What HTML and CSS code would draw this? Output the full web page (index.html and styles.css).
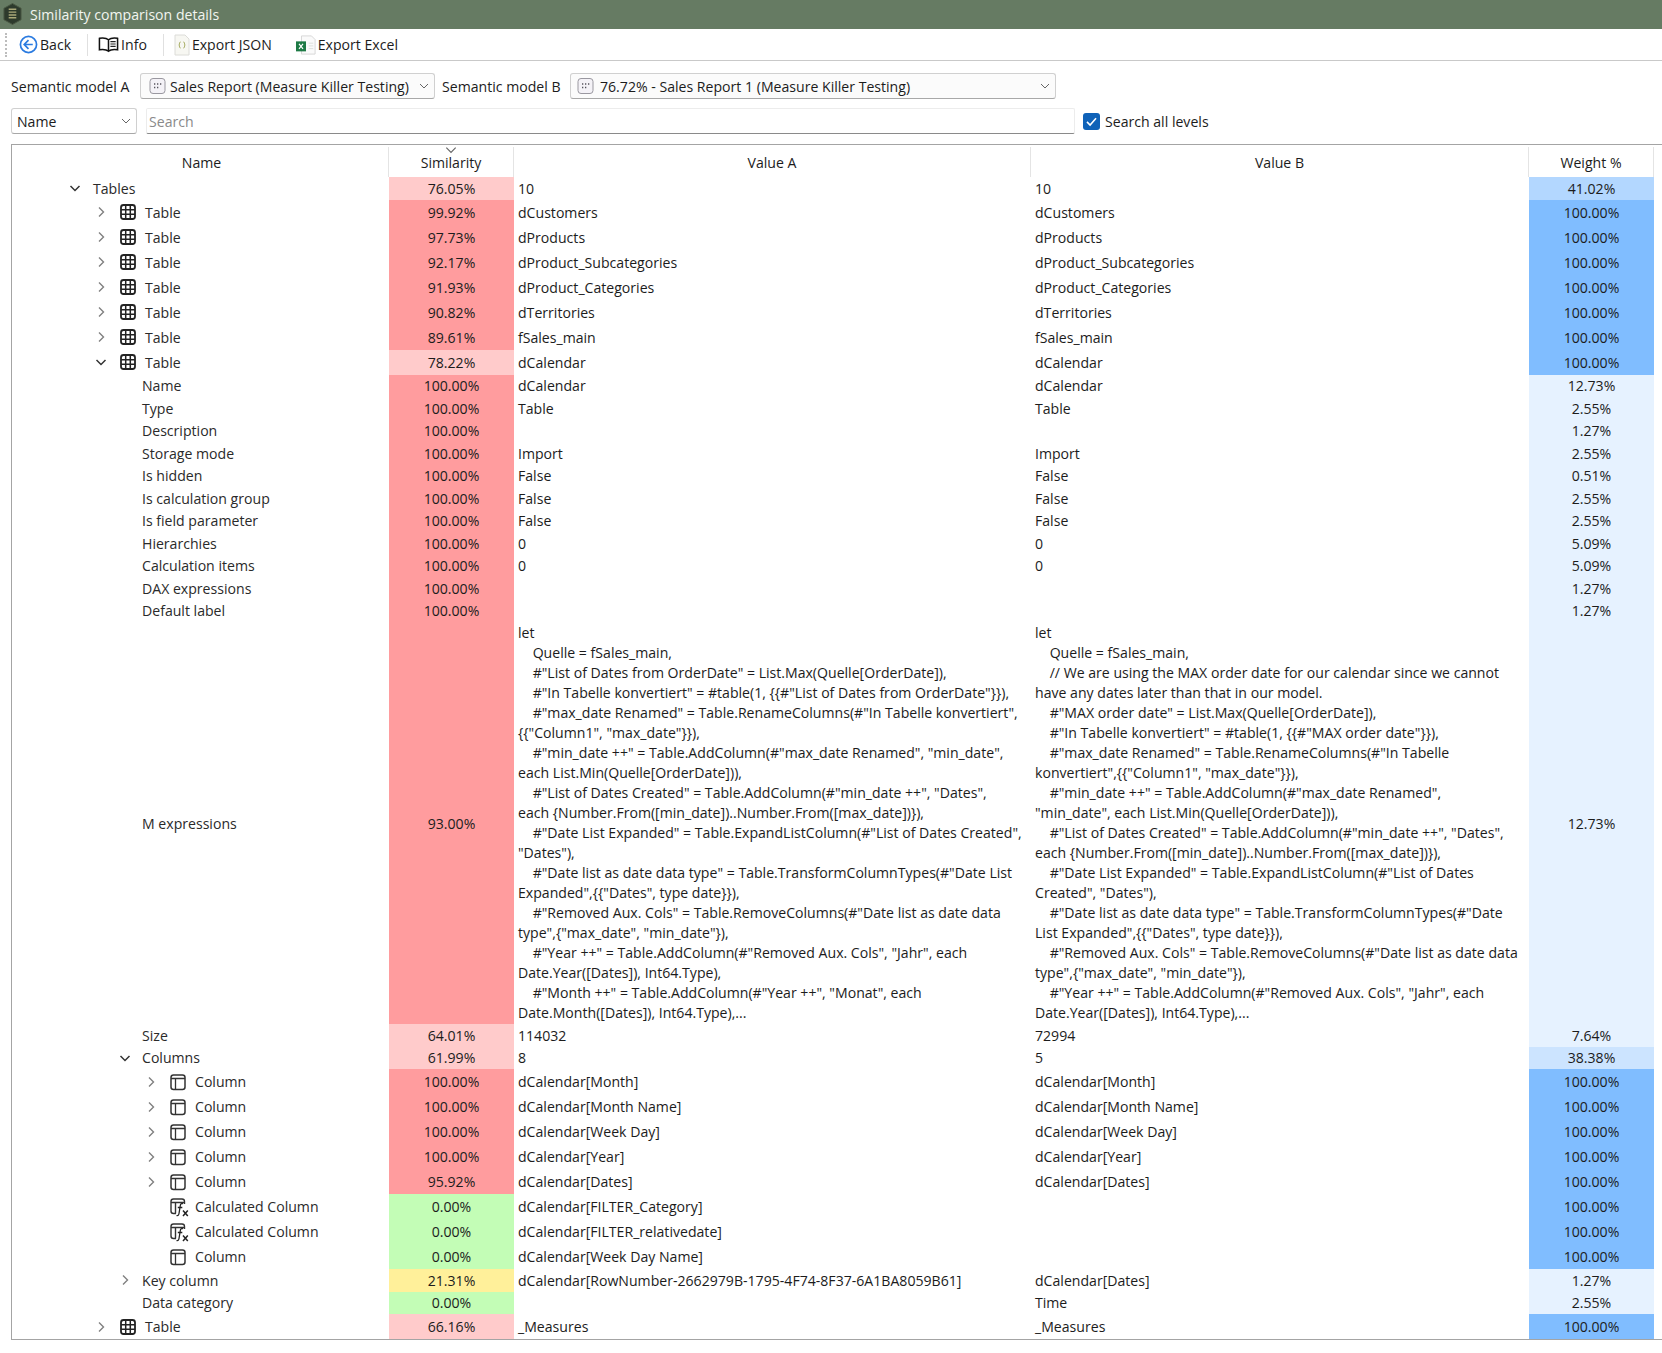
FILE: index.html
```html
<!DOCTYPE html>
<html lang="en">
<head>
    <meta charset="UTF-8">
    <title>Similarity comparison details</title>
    <link rel="stylesheet" href="styles.css">
</head>
<body>
    <!-- Icon sprite -->
    <svg class="sprite" xmlns="http://www.w3.org/2000/svg">
        <symbol id="i-right" viewBox="0 0 16 16"><path d="M6 3.5 10.5 8 6 12.5" fill="none" stroke="#808080" stroke-width="1.4"/></symbol>
        <symbol id="i-down" viewBox="0 0 16 16"><path d="M3.5 6 8 10.5 12.5 6" fill="none" stroke="#333" stroke-width="1.5"/></symbol>
        <symbol id="i-table" viewBox="0 0 18 18"><rect x="2" y="2" width="14" height="14" rx="2.5" fill="none" stroke="#222" stroke-width="1.8"/><path d="M6.7 2v14M11.3 2v14M2 6.7h14M2 11.3h14" fill="none" stroke="#222" stroke-width="1.5"/></symbol>
        <symbol id="i-column" viewBox="0 0 18 18"><rect x="2" y="2" width="14" height="14.5" rx="2.5" fill="none" stroke="#333" stroke-width="1.5"/><path d="M2 5.5h14M6.5 5.5v11" fill="none" stroke="#333" stroke-width="1.3"/></symbol>
        <symbol id="i-calc" viewBox="0 0 20 20"><path d="M7 16.500H4.500A2.500 2.500 0 0 1 2 14V4.500A2.500 2.500 0 0 1 4.500 2h8.500A2.500 2.500 0 0 1 15.500 4.500V7M2 5.500h13.500M6.500 5.500v11" fill="none" stroke="#333" stroke-width="1.400"/><path d="M7.500 18.500c1.500.5 2.200-.3 2.500-2l1.300-8c.3-1.600 1.200-2.300 2.700-1.900M8.800 10.500h4.500" fill="none" stroke="#222" stroke-width="1.300"/><path d="M14 13.500l4.800 5.500M18.800 13.500 14 19" fill="none" stroke="#222" stroke-width="1.500"/></symbol>
        <symbol id="i-combo" viewBox="0 0 18 18"><rect x="1" y="1.500" width="15" height="15" rx="3" fill="#f4f2f7" stroke="#9a98a0"/><path d="M5 7h1.300M8 7h1.300M11 7h1.300M5 10.500h1.300M8 10.500h1.300" fill="none" stroke="#55535c" stroke-width="1.300"/></symbol>
        <symbol id="i-caret" viewBox="0 0 12 12"><path d="M2 4l4 4 4-4" fill="none" stroke="#666" stroke-width="1"/></symbol>
    </svg>

    <!-- Title bar -->
    <div class="titlebar">
        <svg class="app-logo" viewBox="0 0 20 24">
            <path d="M10 1 19 6v12l-9 5-9-5V6z" fill="#2d3a2c" stroke="#4b5a43"/>
            <path d="M6 7h8M6 10h8M6 13h8M6 16h8" stroke="#a9a878" stroke-width="1.500"/>
        </svg>
        <span>Similarity comparison details</span>
    </div>

    <!-- Toolbar -->
    <div class="toolbar">
        <div class="grip"></div>
        <div class="tool tool-back">
            <svg class="tool-icon" viewBox="0 0 20 20">
                <circle cx="10" cy="10" r="8.500" fill="#fff" stroke="#2b7be0" stroke-width="1.800"/>
                <path d="M10 5.500 5.500 10l4.500 4.500M5.500 10h9" fill="none" stroke="#2b7be0" stroke-width="1.800"/>
            </svg>
            <span>Back</span>
        </div>
        <div class="tool-sep"></div>
        <div class="tool tool-info">
            <svg class="tool-icon book" viewBox="0 0 22 18">
                <path d="M11 3.500C9 1.800 5 1.500 1.500 2v12c3.500-.5 7.500-.2 9.500 1.500 2-1.700 6-2 9.500-1.500V2C17 1.500 13 1.800 11 3.500zM11 3.500v12" fill="#fff" stroke="#111" stroke-width="1.600"/>
                <path d="M13 5.500h5.500M13 8h5.500M13 10.500h5.500" stroke="#222" stroke-width="1.200"/>
            </svg>
            <span>Info</span>
        </div>
        <div class="tool-sep"></div>
        <div class="tool tool-json">
            <svg class="tool-icon" viewBox="0 0 16 22">
                <path d="M1 1h10l4 4v16H1z" fill="#f7f7f2" stroke="#dcdcd8"/>
                <path d="M6.500 8c-1.300 0-.8 2.500-1.500 3 .7.500.2 3 1.500 3M9.500 8c1.300 0 .8 2.500 1.500 3-.7.500-.2 3-1.500 3" fill="none" stroke="#9aa04a" stroke-width="1"/>
            </svg>
            <span>Export JSON</span>
        </div>
        <div class="tool tool-excel">
            <svg class="tool-icon excel" viewBox="0 0 22 22">
                <path d="M6 1h11l4 4v16H6z" fill="#fafafa" stroke="#d4d4d4"/>
                <path d="M14 9h5M14 12h5M14 15h5" stroke="#d9dfd9"/>
                <rect x="0" y="7" width="11" height="11" fill="#1d7a45"/>
                <path d="M3.300 9.800l4.400 5.400M7.700 9.800l-4.400 5.400" stroke="#fff" stroke-width="1.300"/>
            </svg>
            <span>Export Excel</span>
        </div>
    </div>

    <!-- Model selection -->
    <div class="model-row">
        <label class="model-label">Semantic model A</label>
        <div class="combo combo-a">
            <svg class="combo-icon"><use href="#i-combo"/></svg>
            <span class="combo-text">Sales Report (Measure Killer Testing)</span>
            <svg class="caret"><use href="#i-caret"/></svg>
        </div>
        <label class="model-label label-b">Semantic model B</label>
        <div class="combo combo-b">
            <svg class="combo-icon"><use href="#i-combo"/></svg>
            <span class="combo-text">76.72% - Sales Report 1 (Measure Killer Testing)</span>
            <svg class="caret"><use href="#i-caret"/></svg>
        </div>
    </div>

    <!-- Search -->
    <div class="search-row">
        <div class="combo combo-field">
            <span class="combo-text">Name</span>
            <svg class="caret"><use href="#i-caret"/></svg>
        </div>
        <div class="search-box">Search</div>
        <div class="check">
            <svg viewBox="0 0 12 12"><path d="M2.800 6.300 5 8.500l4.200-4.800" fill="none" stroke="#fff" stroke-width="1.100"/></svg>
        </div>
        <span class="check-label">Search all levels</span>
    </div>

    <!-- Comparison tree -->
    <div class="grid">
        <table>
            <colgroup>
                <col class="col-name"><col class="col-sim"><col class="col-a"><col class="col-b"><col class="col-weight"><col>
            </colgroup>
            <thead>
                <tr>
                    <th class="th-name">Name</th>
                    <th>Similarity<svg class="sort"><use href="#i-caret"/></svg></th>
                    <th>Value A</th>
                    <th>Value B</th>
                    <th>Weight %</th>
                    <th></th>
                </tr>
            </thead>
            <tbody>
                <tr class="r-sub"><td><div class="node lv0"><svg class="chev"><use href="#i-down"/></svg><span class="lbl-tables">Tables</span></div></td><td class="sim light">76.05%</td><td class="val">10</td><td class="val">10</td><td class="wt mid">41.02%</td><td></td></tr>
                <tr class="r-big"><td><div class="node lv1"><svg class="chev"><use href="#i-right"/></svg><svg class="ico"><use href="#i-table"/></svg>Table</div></td><td class="sim strong">99.92%</td><td class="val">dCustomers</td><td class="val">dCustomers</td><td class="wt full">100.00%</td><td></td></tr>
                <tr class="r-big"><td><div class="node lv1"><svg class="chev"><use href="#i-right"/></svg><svg class="ico"><use href="#i-table"/></svg>Table</div></td><td class="sim strong">97.73%</td><td class="val">dProducts</td><td class="val">dProducts</td><td class="wt full">100.00%</td><td></td></tr>
                <tr class="r-big"><td><div class="node lv1"><svg class="chev"><use href="#i-right"/></svg><svg class="ico"><use href="#i-table"/></svg>Table</div></td><td class="sim strong">92.17%</td><td class="val">dProduct_Subcategories</td><td class="val">dProduct_Subcategories</td><td class="wt full">100.00%</td><td></td></tr>
                <tr class="r-big"><td><div class="node lv1"><svg class="chev"><use href="#i-right"/></svg><svg class="ico"><use href="#i-table"/></svg>Table</div></td><td class="sim strong">91.93%</td><td class="val">dProduct_Categories</td><td class="val">dProduct_Categories</td><td class="wt full">100.00%</td><td></td></tr>
                <tr class="r-big"><td><div class="node lv1"><svg class="chev"><use href="#i-right"/></svg><svg class="ico"><use href="#i-table"/></svg>Table</div></td><td class="sim strong">90.82%</td><td class="val">dTerritories</td><td class="val">dTerritories</td><td class="wt full">100.00%</td><td></td></tr>
                <tr class="r-big"><td><div class="node lv1"><svg class="chev"><use href="#i-right"/></svg><svg class="ico"><use href="#i-table"/></svg>Table</div></td><td class="sim strong">89.61%</td><td class="val">fSales_main</td><td class="val">fSales_main</td><td class="wt full">100.00%</td><td></td></tr>
                <tr class="r-big"><td><div class="node lv1"><svg class="chev"><use href="#i-down"/></svg><svg class="ico"><use href="#i-table"/></svg>Table</div></td><td class="sim light">78.22%</td><td class="val">dCalendar</td><td class="val">dCalendar</td><td class="wt full">100.00%</td><td></td></tr>
                <tr class="r-sub"><td><div class="node lv2">Name</div></td><td class="sim strong">100.00%</td><td class="val">dCalendar</td><td class="val">dCalendar</td><td class="wt pale">12.73%</td><td></td></tr>
                <tr class="r-sub"><td><div class="node lv2">Type</div></td><td class="sim strong">100.00%</td><td class="val">Table</td><td class="val">Table</td><td class="wt pale">2.55%</td><td></td></tr>
                <tr class="r-sub"><td><div class="node lv2">Description</div></td><td class="sim strong">100.00%</td><td class="val"></td><td class="val"></td><td class="wt pale">1.27%</td><td></td></tr>
                <tr class="r-sub"><td><div class="node lv2">Storage mode</div></td><td class="sim strong">100.00%</td><td class="val">Import</td><td class="val">Import</td><td class="wt pale">2.55%</td><td></td></tr>
                <tr class="r-sub"><td><div class="node lv2">Is hidden</div></td><td class="sim strong">100.00%</td><td class="val">False</td><td class="val">False</td><td class="wt pale">0.51%</td><td></td></tr>
                <tr class="r-sub"><td><div class="node lv2">Is calculation group</div></td><td class="sim strong">100.00%</td><td class="val">False</td><td class="val">False</td><td class="wt pale">2.55%</td><td></td></tr>
                <tr class="r-sub"><td><div class="node lv2">Is field parameter</div></td><td class="sim strong">100.00%</td><td class="val">False</td><td class="val">False</td><td class="wt pale">2.55%</td><td></td></tr>
                <tr class="r-sub"><td><div class="node lv2">Hierarchies</div></td><td class="sim strong">100.00%</td><td class="val">0</td><td class="val">0</td><td class="wt pale">5.09%</td><td></td></tr>
                <tr class="r-sub"><td><div class="node lv2">Calculation items</div></td><td class="sim strong">100.00%</td><td class="val">0</td><td class="val">0</td><td class="wt pale">5.09%</td><td></td></tr>
                <tr class="r-sub"><td><div class="node lv2">DAX expressions</div></td><td class="sim strong">100.00%</td><td class="val"></td><td class="val"></td><td class="wt pale">1.27%</td><td></td></tr>
                <tr class="r-sub"><td><div class="node lv2">Default label</div></td><td class="sim strong">100.00%</td><td class="val"></td><td class="val"></td><td class="wt pale">1.27%</td><td></td></tr>
                <tr class="r-code">
                    <td><div class="node lv2">M expressions</div></td>
                    <td class="sim strong">93.00%</td>
                    <td class="val code">let
    Quelle = fSales_main,
    #"List of Dates from OrderDate" = List.Max(Quelle[OrderDate]),
    #"In Tabelle konvertiert" = #table(1, {{#"List of Dates from OrderDate"}}),
    #"max_date Renamed" = Table.RenameColumns(#"In Tabelle konvertiert",
{{"Column1", "max_date"}}),
    #"min_date ++" = Table.AddColumn(#"max_date Renamed", "min_date",
each List.Min(Quelle[OrderDate])),
    #"List of Dates Created" = Table.AddColumn(#"min_date ++", "Dates",
each {Number.From([min_date])..Number.From([max_date])}),
    #"Date List Expanded" = Table.ExpandListColumn(#"List of Dates Created",
"Dates"),
    #"Date list as date data type" = Table.TransformColumnTypes(#"Date List
Expanded",{{"Dates", type date}}),
    #"Removed Aux. Cols" = Table.RemoveColumns(#"Date list as date data
type",{"max_date", "min_date"}),
    #"Year ++" = Table.AddColumn(#"Removed Aux. Cols", "Jahr", each
Date.Year([Dates]), Int64.Type),
    #"Month ++" = Table.AddColumn(#"Year ++", "Monat", each
Date.Month([Dates]), Int64.Type),...</td>
                    <td class="val code">let
    Quelle = fSales_main,
    // We are using the MAX order date for our calendar since we cannot
have any dates later than that in our model.
    #"MAX order date" = List.Max(Quelle[OrderDate]),
    #"In Tabelle konvertiert" = #table(1, {{#"MAX order date"}}),
    #"max_date Renamed" = Table.RenameColumns(#"In Tabelle
konvertiert",{{"Column1", "max_date"}}),
    #"min_date ++" = Table.AddColumn(#"max_date Renamed",
"min_date", each List.Min(Quelle[OrderDate])),
    #"List of Dates Created" = Table.AddColumn(#"min_date ++", "Dates",
each {Number.From([min_date])..Number.From([max_date])}),
    #"Date List Expanded" = Table.ExpandListColumn(#"List of Dates
Created", "Dates"),
    #"Date list as date data type" = Table.TransformColumnTypes(#"Date
List Expanded",{{"Dates", type date}}),
    #"Removed Aux. Cols" = Table.RemoveColumns(#"Date list as date data
type",{"max_date", "min_date"}),
    #"Year ++" = Table.AddColumn(#"Removed Aux. Cols", "Jahr", each
Date.Year([Dates]), Int64.Type),...</td>
                    <td class="wt pale">12.73%</td><td></td>
                </tr>
                <tr class="r-sub"><td><div class="node lv2">Size</div></td><td class="sim light">64.01%</td><td class="val">114032</td><td class="val">72994</td><td class="wt pale">7.64%</td><td></td></tr>
                <tr class="r-sub"><td><div class="node lv1b"><svg class="chev"><use href="#i-down"/></svg>Columns</div></td><td class="sim light">61.99%</td><td class="val">8</td><td class="val">5</td><td class="wt soft">38.38%</td><td></td></tr>
                <tr class="r-big"><td><div class="node lv3"><svg class="chev"><use href="#i-right"/></svg><svg class="ico"><use href="#i-column"/></svg>Column</div></td><td class="sim strong">100.00%</td><td class="val">dCalendar[Month]</td><td class="val">dCalendar[Month]</td><td class="wt full">100.00%</td><td></td></tr>
                <tr class="r-big"><td><div class="node lv3"><svg class="chev"><use href="#i-right"/></svg><svg class="ico"><use href="#i-column"/></svg>Column</div></td><td class="sim strong">100.00%</td><td class="val">dCalendar[Month Name]</td><td class="val">dCalendar[Month Name]</td><td class="wt full">100.00%</td><td></td></tr>
                <tr class="r-big"><td><div class="node lv3"><svg class="chev"><use href="#i-right"/></svg><svg class="ico"><use href="#i-column"/></svg>Column</div></td><td class="sim strong">100.00%</td><td class="val">dCalendar[Week Day]</td><td class="val">dCalendar[Week Day]</td><td class="wt full">100.00%</td><td></td></tr>
                <tr class="r-big"><td><div class="node lv3"><svg class="chev"><use href="#i-right"/></svg><svg class="ico"><use href="#i-column"/></svg>Column</div></td><td class="sim strong">100.00%</td><td class="val">dCalendar[Year]</td><td class="val">dCalendar[Year]</td><td class="wt full">100.00%</td><td></td></tr>
                <tr class="r-big"><td><div class="node lv3"><svg class="chev"><use href="#i-right"/></svg><svg class="ico"><use href="#i-column"/></svg>Column</div></td><td class="sim strong">95.92%</td><td class="val">dCalendar[Dates]</td><td class="val">dCalendar[Dates]</td><td class="wt full">100.00%</td><td></td></tr>
                <tr class="r-big"><td><div class="node lv3 no-chev"><svg class="ico ico-calc"><use href="#i-calc"/></svg>Calculated Column</div></td><td class="sim none">0.00%</td><td class="val">dCalendar[FILTER_Category]</td><td class="val"></td><td class="wt full">100.00%</td><td></td></tr>
                <tr class="r-big"><td><div class="node lv3 no-chev"><svg class="ico ico-calc"><use href="#i-calc"/></svg>Calculated Column</div></td><td class="sim none">0.00%</td><td class="val">dCalendar[FILTER_relativedate]</td><td class="val"></td><td class="wt full">100.00%</td><td></td></tr>
                <tr class="r-big"><td><div class="node lv3 no-chev"><svg class="ico"><use href="#i-column"/></svg>Column</div></td><td class="sim none">0.00%</td><td class="val">dCalendar[Week Day Name]</td><td class="val"></td><td class="wt full">100.00%</td><td></td></tr>
                <tr class="r-sub"><td><div class="node lv1b"><svg class="chev"><use href="#i-right"/></svg>Key column</div></td><td class="sim low">21.31%</td><td class="val">dCalendar[RowNumber-2662979B-1795-4F74-8F37-6A1BA8059B61]</td><td class="val">dCalendar[Dates]</td><td class="wt pale">1.27%</td><td></td></tr>
                <tr class="r-sub"><td><div class="node lv2">Data category</div></td><td class="sim none">0.00%</td><td class="val"></td><td class="val">Time</td><td class="wt pale">2.55%</td><td></td></tr>
                <tr class="r-big"><td><div class="node lv1"><svg class="chev"><use href="#i-right"/></svg><svg class="ico"><use href="#i-table"/></svg>Table</div></td><td class="sim light">66.16%</td><td class="val">_Measures</td><td class="val">_Measures</td><td class="wt full">100.00%</td><td></td></tr>
            </tbody>
        </table>
    </div>
</body>
</html>
```

FILE: styles.css
```css
* {
    box-sizing: border-box;
    font-family: 'Open Sans', 'Noto Sans', sans-serif;
}
body {
    margin: 0;
    background-color: #fff;
    color: #1c1c1c;
    font-size: 14.1px;
    overflow: hidden;
}
.sprite {
    display: none;
}

/* Title bar */
.titlebar {
    display: flex;
    align-items: center;
    height: 29px;
    padding: 0 0 1px 3px;
    gap: 8px;
    background-color: #667b63;
    color: #f2f5f0;
}
.app-logo {
    width: 19px;
    height: 24px;
}

/* Toolbar */
.toolbar {
    display: flex;
    align-items: center;
    height: 32px;
    padding-left: 5px;
    border-bottom: 1px solid #c9c9c9;
}
.grip {
    width: 2px;
    height: 24px;
    margin-right: 12px;
    border-left: 2px dotted #bdbdbd;
}
.tool {
    display: flex;
    align-items: center;
    gap: 2px;
}
.tool-icon {
    width: 19px;
    height: 19px;
}
.tool-icon.book {
    width: 21px;
    height: 18px;
}
.tool-sep {
    width: 1px;
    height: 22px;
    margin: 0 10px 0 16px;
    background-color: #e0e0e0;
}
.tool-json .tool-icon {
    width: 16px;
    height: 22px;
}
.tool-excel {
    margin-left: 24px;
}
.tool-icon.excel {
    width: 20px;
    height: 22px;
}

/* Model selection and search */
.model-row {
    display: flex;
    align-items: center;
    height: 26px;
    margin-top: 12px;
    padding-left: 11px;
}
.model-label {
    width: 129px;
}
.label-b {
    width: 128px;
    margin-left: 7px;
}
.combo {
    display: flex;
    align-items: center;
    height: 26px;
    padding: 0 4px 0 8px;
    border: 1px solid #d0d0d0;
    border-bottom-color: #a8a8a8;
    border-radius: 3px;
    background-color: #fbfbfb;
}
.combo-a {
    width: 295px;
}
.combo-b {
    width: 486px;
    padding-left: 6px;
}
.combo-field {
    width: 126px;
    padding-left: 5px;
    background-color: #fff;
}
.combo-icon {
    width: 18px;
    height: 18px;
    margin-right: 3px;
}
.combo-b .combo-icon {
    margin-right: 5px;
}
.combo-text {
    flex: 1;
    white-space: nowrap;
}
.caret {
    width: 12px;
    height: 12px;
}
.search-row {
    display: flex;
    align-items: center;
    height: 26px;
    margin-top: 9px;
    padding-left: 11px;
}
.search-box {
    width: 929px;
    height: 26px;
    margin-left: 9px;
    padding: 3px 2px 0;
    border: 1px solid #ececec;
    border-bottom: 1px solid #8a8a8a;
    border-radius: 2px;
    color: #8a8a8a;
}
.check {
    width: 17px;
    height: 17px;
    margin: 0 5px 0 8px;
    border-radius: 3px;
    background-color: #0f62b8;
}
.check svg {
    display: block;
    width: 17px;
    height: 17px;
}

/* Comparison grid */
.grid {
    height: 1196px;
    margin: 10px 0 0 11px;
    padding-top: 2px;
    border: 1px solid #a4a4a4;
    border-right: none;
    overflow: hidden;
}
table {
    width: 1650px;
    table-layout: fixed;
    border-collapse: separate;
    border-spacing: 0;
}
.col-name {
    width: 377px;
}
.col-sim {
    width: 125px;
}
.col-a {
    width: 517px;
}
.col-b {
    width: 498px;
}
.col-weight {
    width: 125px;
}
th {
    position: relative;
    height: 30px;
    padding: 0;
    font-weight: 400;
    border-right: 1px solid #e4e4e4;
}
th:last-child {
    border-right: none;
}
.th-name {
    padding-left: 3px;
}
.sort {
    position: absolute;
    top: -4px;
    left: 55px;
    width: 14px;
    height: 14px;
}
td {
    padding: 0;
    white-space: nowrap;
}
.r-sub {
    height: 22.5px;
}
.r-big {
    height: 25px;
}
.r-code {
    height: 402px;
}
.sim,
.wt {
    text-align: center;
}
.val {
    padding-left: 4px;
}
.code {
    padding-top: 1px;
    line-height: 20px;
    white-space: pre;
    vertical-align: top;
}
.strong { background-color: #ff9c9e; }
.light { background-color: #ffcbcb; }
.none { background-color: #c3fdb6; }
.low { background-color: #fff09a; }
.full { background-color: #80bdff; }
.mid { background-color: #b3d7ff; }
.soft { background-color: #cce4ff; }
.pale { background-color: #e6f2ff; }

/* Tree column */
.node {
    display: flex;
    align-items: center;
    color: #2a2a2a;
}
.chev {
    width: 16px;
    height: 16px;
    flex: none;
}
.ico {
    width: 18px;
    height: 18px;
    flex: none;
    margin: 0 8px 0 10px;
}
.ico-calc {
    width: 20px;
    height: 20px;
    margin-right: 6px;
}
.lbl-tables {
    margin-left: 10px;
}
.lv0 {
    padding-left: 55px;
}
.lv1 {
    padding-left: 81px;
}
.lv1b {
    padding-left: 105px;
}
.lv1b .chev {
    margin-right: 9px;
}
.lv2 {
    padding-left: 130px;
}
.lv3 {
    padding-left: 131px;
}
.no-chev {
    padding-left: 147px;
}
```
